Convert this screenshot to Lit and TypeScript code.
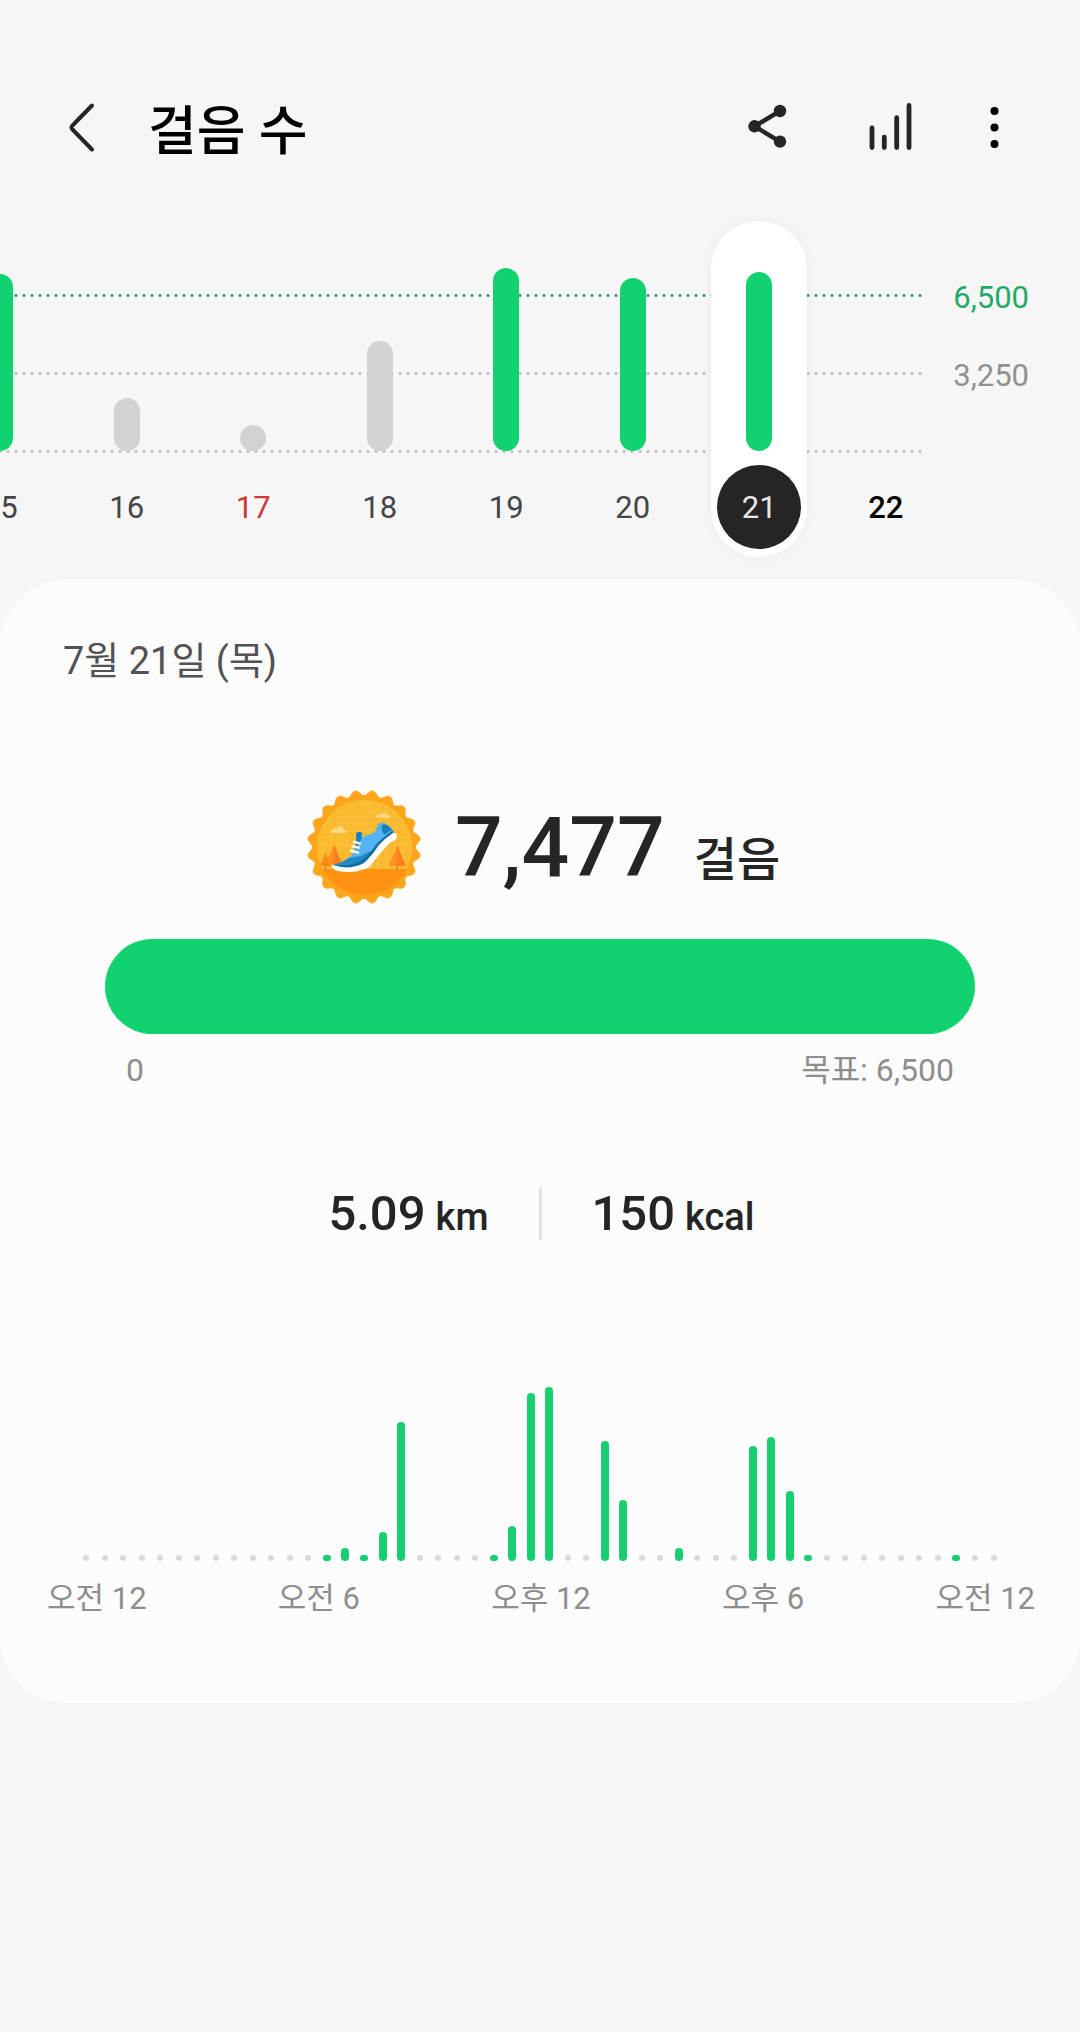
import { LitElement, html, svg, css } from "lit";
import { customElement, property, state } from "lit/decorators.js";
import { classMap } from "lit/directives/class-map.js";
import { styleMap } from "lit/directives/style-map.js";

interface Day {
  date: number;
  steps: number;
  holiday?: boolean;
  today?: boolean;
}

const GOAL = 6500;
const GOAL_HEIGHT = 156;

const DAYS: Day[] = [
  { date: 15, steps: 7375 },
  { date: 16, steps: 2210 },
  { date: 17, steps: 600, holiday: true },
  { date: 18, steps: 4580 },
  { date: 19, steps: 7625 },
  { date: 20, steps: 7210 },
  { date: 21, steps: 7477 },
  { date: 22, steps: 0, today: true },
];

/* Bar heights by half-hour slot; slots that are not listed had no steps. */
const SLOT_COUNT = 50;
const SLOTS: Record<number, number> = {
  13: 6, 14: 13, 15: 6, 16: 29, 17: 139,
  22: 6, 23: 35, 24: 168, 25: 174,
  28: 120, 29: 61, 32: 13,
  36: 115, 37: 124, 38: 70, 39: 6,
  47: 6,
};

const HOUR_LABELS = ["오전 12", "오전 6", "오후 12", "오후 6", "오전 12"];

const format = (n: number) => n.toLocaleString("en-US");

/* Outline of the badge: a circle with twenty soft teeth. */
const sealPath = (cx: number, cy: number): string => {
  const points: string[] = [];
  for (let deg = 0; deg < 360; deg += 1.5) {
    const a = (deg * Math.PI) / 180;
    const r = 162 + 8 * Math.cos(20 * a + Math.PI);
    points.push(`${(cx + r * Math.cos(a)).toFixed(1)},${(cy + r * Math.sin(a)).toFixed(1)}`);
  }
  return `M${points.join("L")}Z`;
};

@customElement("steps-header")
export class StepsHeader extends LitElement {
  static styles = css`
    :host {
      display: block;
    }
    .bar {
      display: flex;
      align-items: center;
      padding: 80px 51px 45px 50px;
    }
    .title {
      flex: 1;
      margin: 0 0 0 34px;
      padding-top: 8px;
      font-size: 53px;
      line-height: 88px;
      font-weight: 500;
      color: #000;
    }
    .icon-button {
      display: block;
      padding: 0;
      border: 0;
      background: none;
      color: #252525;
    }
    .icon-button svg {
      display: block;
    }
    .actions {
      display: flex;
      gap: 58px;
    }
  `;

  render() {
    return html`
      <header class="bar">
        <button class="icon-button" aria-label="뒤로">
          <svg width="64" height="64" viewBox="0 0 64 64" fill="none" stroke="currentColor" stroke-width="4" stroke-linecap="round" stroke-linejoin="round">
            <path d="M42 9.500 22.500 29.500Q20.500 31.500 22.500 33.500L42 53.500" />
          </svg>
        </button>
        <h1 class="title">걸음 수</h1>
        <div class="actions">
          <button class="icon-button" aria-label="공유">
            <svg width="64" height="64" viewBox="0 0 64 64" fill="currentColor">
              <path d="M45 15 19.500 30.300 45 45.600" fill="none" stroke="currentColor" stroke-width="4.500" />
              <circle cx="45" cy="15" r="6.200" /><circle cx="19.500" cy="30.300" r="6.200" /><circle cx="45" cy="45.600" r="6.200" />
            </svg>
          </button>
          <button class="icon-button" aria-label="통계">
            <svg width="64" height="64" viewBox="0 0 64 64" stroke="currentColor" stroke-width="4.800" stroke-linecap="round">
              <path d="M15 32V51.500M27.300 41.200V51.500M39.700 21.700V51.500M52 9.400V51.500" />
            </svg>
          </button>
          <button class="icon-button" aria-label="더보기">
            <svg width="50" height="64" viewBox="0 0 50 64" fill="#000">
              <circle cx="15.500" cy="15" r="4" /><circle cx="15.500" cy="31.500" r="4" /><circle cx="15.500" cy="48" r="4" />
            </svg>
          </button>
        </div>
      </header>
    `;
  }
}

@customElement("week-chart")
export class WeekChart extends LitElement {
  @property({ attribute: false }) days: Day[] = [];
  @property({ type: Number }) selected = 0;

  static styles = css`
    :host {
      display: block;
      overflow-x: clip;
    }
    .chart {
      display: grid;
      grid-template-columns: 1fr 156px;
    }
    .lines {
      grid-area: 1 / 1;
      align-self: start;
      display: flex;
      flex-direction: column;
      justify-content: space-between;
      height: 159px;
      margin-top: 73px;
    }
    .line {
      height: 3px;
      background: radial-gradient(circle, #bdbdbd 1px, transparent 2px) right top / 8px 3px repeat-x;
    }
    .line.goal {
      background-image: radial-gradient(circle, #22a068 1px, transparent 2px);
    }
    .scale {
      grid-area: 1 / 2;
      display: flex;
      flex-direction: column;
      gap: 42px;
      padding: 59px 51px 0 0;
      text-align: right;
      font-size: 31px;
      line-height: 36px;
      color: #919191;
    }
    .scale .goal {
      color: #1fab67;
    }
    .days {
      grid-area: 1 / 1 / 2 / 3;
      display: flex;
      margin: 0 131px 0 -63px;
      padding: 0;
      list-style: none;
    }
    .item {
      flex: 1;
      display: flex;
      justify-content: center;
    }
    .day {
      display: flex;
      flex-direction: column;
      align-items: center;
      justify-content: flex-end;
      gap: 14px;
      width: 96px;
      height: 336px;
      padding: 0 0 8px;
      border: 0;
      border-radius: 48px;
      background: none;
      font: inherit;
      font-size: 31px;
      color: #454545;
    }
    .day.selected {
      background: #fff;
      box-shadow: 0 0 12px rgba(0, 0, 0, 0.05);
    }
    .fill {
      width: 26px;
      min-height: 26px;
      border-radius: 13px;
      background: #d2d2d2;
    }
    .fill.reached {
      background: #12d16f;
    }
    .date {
      width: 84px;
      height: 84px;
      border-radius: 42px;
      line-height: 86px;
    }
    .holiday .date {
      color: #cc3a32;
    }
    .today .date {
      color: #000;
      font-weight: 500;
    }
    .selected .date {
      background: #252525;
      color: #e8e8e8;
    }
  `;

  private pick(date: number) {
    this.dispatchEvent(new CustomEvent("pick", { detail: date }));
  }

  render() {
    return html`
      <div class="chart">
        <div class="lines">
          <div class="line goal"></div>
          <div class="line"></div>
          <div class="line"></div>
        </div>
        <div class="scale">
          <span class="goal">${format(GOAL)}</span>
          <span>${format(GOAL / 2)}</span>
        </div>
        <ul class="days">
          ${this.days.map(
            (d) => html`
              <li class="item">
                <button
                  class=${classMap({ day: true, selected: d.date === this.selected, holiday: !!d.holiday, today: !!d.today })}
                  @click=${() => this.pick(d.date)}
                >
                  ${d.steps
                    ? html`<span
                        class=${classMap({ fill: true, reached: d.steps >= GOAL })}
                        style=${styleMap({ height: `${Math.round((d.steps / GOAL) * GOAL_HEIGHT)}px` })}
                      ></span>`
                    : null}
                  <span class="date">${d.date}</span>
                </button>
              </li>
            `
          )}
        </ul>
      </div>
    `;
  }
}

@customElement("goal-badge")
export class GoalBadge extends LitElement {
  static styles = css`
    :host {
      display: block;
    }
    .badge {
      display: block;
      width: 114px;
      height: 114px;
    }
  `;

  render() {
    const tree = (x: number, top: number, w: number, base: number) => svg`
      <path d="M${x} ${top}L${x + w} ${base}H${x - w}Z" fill="#ff8f1c" />
      <path d="M${x} ${top}L${x + w} ${base}H${x}Z" fill="#fb7f1d" />`;
    return html`
      <svg class="badge" viewBox="48 62 342 342" role="img" aria-label="목표 달성">
        <defs>
          <clipPath id="disc"><circle cx="221" cy="234" r="143" /></clipPath>
          <pattern id="facets" width="24" height="20" patternUnits="userSpaceOnUse">
            <path d="M0 20 12 0 24 20Z" fill="#f6b21f" opacity="0.35" />
          </pattern>
        </defs>
        <path d=${sealPath(219, 233)} fill="#fda61c" stroke="#fda61c" stroke-width="3" stroke-linejoin="round" />
        <circle cx="221" cy="234" r="145" fill="#f39d1a" />
        <g clip-path="url(#disc)">
          <rect x="70" y="80" width="300" height="300" fill="#fbbd35" />
          <rect x="70" y="80" width="300" height="220" fill="url(#facets)" />
          <rect x="70" y="299" width="300" height="90" fill="#ff9113" />
          ${tree(103, 251, 17, 290)} ${tree(129, 226, 25, 285)} ${tree(319, 229, 25, 289)}
          <path d="M101 285h4v15h-4zM127 280h4v20h-4zM317 285h4v15h-4z" fill="#e87716" />
        </g>
        <g fill="#ffd98a">
          <rect x="120" y="182" width="46" height="9" rx="4.500" />
          <circle cx="134" cy="182" r="7" /><circle cx="148" cy="180" r="10" />
          <rect x="254" y="137" width="43" height="8" rx="4" />
          <circle cx="267" cy="138" r="5" /><circle cx="279" cy="137" r="7" />
        </g>
        <path d="M124 287Q121 299 141 305Q165 311 200 306L212 301Q228 301 240 288Q259 260 285 232Q298 217 314 211Q320 204 317 193L304 190L262 222L214 275Q176 296 124 287Z" fill="#fff" />
        <path d="M127 287Q166 277 184 254Q197 230 196 191Q202 186 214 190L212 204Q226 197 243 193Q259 185 258 170Q261 160 275 161Q289 161 306 184Q302 195 288 204Q262 223 243 250Q225 276 203 285Q174 297 127 287Z" fill="#54b3f3" />
        <path d="M127 286Q157 279 174 265Q202 266 225 252L248 242Q228 273 205 285Q174 296 127 286Z" fill="#2189c4" />
        <path d="M127 287Q175 291 205 277Q232 262 251 231Q271 207 306 183L308 189Q282 207 263 228Q242 261 219 281Q174 304 127 287Z" fill="#126da5" />
        <path d="M196 191Q202 186 214 190L210 211 193 243Q197 220 196 191ZM273 166Q289 162 303 181L279 196Q269 182 273 166Z" fill="#1880bb" />
        <path d="M189 217 207 223M184 231 204 235M180 244 201 250" stroke="#fff" stroke-width="7" stroke-linecap="round" />
      </svg>
    `;
  }
}

@customElement("hour-chart")
export class HourChart extends LitElement {
  static styles = css`
    :host {
      display: block;
    }
    .slots {
      display: flex;
      align-items: flex-end;
      height: 174px;
      padding: 0 77px;
    }
    .slot {
      flex: 1;
      display: flex;
      justify-content: center;
    }
    .dot {
      width: 6px;
      height: 6px;
      border-radius: 3px;
      background: #d9d9d9;
    }
    .fill {
      width: 8px;
      border-radius: 4px;
      background: #17cf70;
    }
    .hours {
      display: flex;
      justify-content: space-between;
      padding: 18px 45px 0 47px;
      font-size: 31px;
      line-height: 40px;
      color: #8e8e8e;
    }
  `;

  render() {
    const slots = Array.from({ length: SLOT_COUNT }, (_, i) => SLOTS[i] ?? 0);
    return html`
      <div class="slots">
        ${slots.map(
          (h) => html`<div class="slot">
            ${h ? html`<span class="fill" style=${styleMap({ height: `${h}px` })}></span>` : html`<span class="dot"></span>`}
          </div>`
        )}
      </div>
      <div class="hours">${HOUR_LABELS.map((t) => html`<span>${t}</span>`)}</div>
    `;
  }
}

@customElement("app-root")
export class AppRoot extends LitElement {
  @state() private selected = 21;

  static styles = css`
    :host {
      display: block;
      min-height: 100vh;
      background: #f6f6f6;
      color: #252525;
      font-family: Roboto, "Noto Sans CJK KR", sans-serif;
    }
    .card {
      margin-top: 22px;
      padding: 58px 0 84px;
      border-radius: 68px;
      background: #fcfcfc;
    }
    .day-title {
      margin: 0 63px;
      font-size: 38px;
      line-height: 48px;
      font-weight: 400;
      color: #525252;
    }
    .hero {
      display: flex;
      align-items: center;
      justify-content: center;
      gap: 34px;
      margin-top: 105px;
      padding-left: 7px;
    }
    .total {
      display: flex;
      align-items: baseline;
      gap: 29px;
      margin: 0;
      padding-top: 2px;
      font-weight: 500;
      font-size: 84px;
      line-height: 96px;
    }
    .unit {
      font-size: 47px;
      line-height: 48px;
    }
    .goal {
      margin: 35px 105px 0;
    }
    .progress {
      display: block;
      width: 100%;
      height: 95px;
      appearance: none;
      border: 0;
      border-radius: 48px;
      overflow: hidden;
      background: #ececec;
    }
    .progress::-webkit-progress-bar {
      background: #ececec;
    }
    .progress::-webkit-progress-value {
      background: #12d16f;
    }
    .range {
      display: flex;
      justify-content: space-between;
      padding: 16px 21px 0;
      font-size: 32px;
      line-height: 40px;
      color: #8e8e8e;
    }
    .stats {
      display: grid;
      grid-template-columns: 1fr 3px 1fr;
      align-items: center;
      gap: 50px;
      margin-top: 97px;
      font-weight: 500;
    }
    .stat {
      display: flex;
      align-items: baseline;
      gap: 10px;
      margin: 0;
      font-size: 49px;
      line-height: 53px;
    }
    .stat:first-child {
      justify-content: flex-end;
    }
    .stat small {
      font-size: 38px;
      line-height: 40px;
    }
    .divider {
      height: 53px;
      background: #e4e4e4;
    }
    .hourly {
      margin-top: 147px;
    }
  `;

  render() {
    const day = DAYS.find((d) => d.date === this.selected)!;
    const weekday = "일월화수목금토"[(day.date - 17 + 7) % 7];
    return html`
      <steps-header></steps-header>
      <main>
        <week-chart .days=${DAYS} .selected=${this.selected} @pick=${(e: CustomEvent<number>) => (this.selected = e.detail)}></week-chart>
        <section class="card">
          <h2 class="day-title">7월 ${day.date}일 (${weekday})</h2>
          <div class="hero">
            <goal-badge></goal-badge>
            <p class="total"><span>${format(day.steps)}</span><span class="unit">걸음</span></p>
          </div>
          <div class="goal">
            <progress class="progress" aria-label="걸음 수 목표" max=${GOAL} .value=${Math.min(day.steps, GOAL)}></progress>
            <div class="range"><span>0</span><span>목표: ${format(GOAL)}</span></div>
          </div>
          <div class="stats">
            <p class="stat">5.09 <small>km</small></p>
            <div class="divider"></div>
            <p class="stat">150 <small>kcal</small></p>
          </div>
          <hour-chart class="hourly"></hour-chart>
        </section>
      </main>
    `;
  }
}
